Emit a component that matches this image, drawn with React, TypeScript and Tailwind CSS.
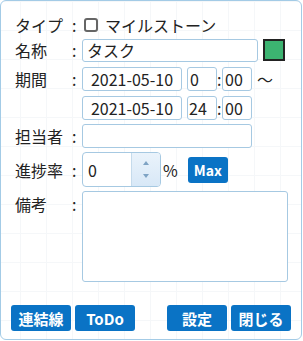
import React from "react";

const font = { fontFamily: '"Noto Sans CJK JP", "Noto Sans", sans-serif' };

function Label ( { text }: { text: string } )
{
  return (
    <div className="flex items-center shrink-0">
      <span className="w-[57px] text-[16px] text-[#222]">{ text }</span>
      <span className="w-[10px] text-[16px] text-[#222]">:</span>
    </div>
  );
}

function Box ( { className = "", children }: { className?: string; children?: React.ReactNode } )
{
  return (
    <div className={ `border border-[#a6c9e2] rounded-[3px] bg-white flex items-center text-[16px] text-[#222] ${ className }` }>
      { children }
    </div>
  );
}

function Btn ( { text, className = "" }: { text: string; className?: string } )
{
  return (
    <button className={ `w-[60px] h-[26px] rounded-[3px] bg-[#0a73c5] text-white text-[15px] font-bold flex items-center justify-center leading-none ${ className }` }>
      { text }
    </button>
  );
}

export default function App ()
{
  return (
    <div className="w-[303px] h-[341px] bg-white" style={ font }>
      <div className="w-[302px] h-[340px] border border-[#a3cbe6] rounded-[6px] bg-[linear-gradient(to_right,#f5f7f9_1px,transparent_1px),linear-gradient(to_bottom,#f5f7f9_1px,transparent_1px)] bg-[size:26px_29px] bg-[position:19px_0px] pl-[14px] pt-[12px] flex flex-col">
        {/* タイプ */ }
        <div className="flex items-center h-[24px]">
          <Label text="タイプ" />
          <span className="ml-[2px] w-[14px] h-[14px] border-2 border-[#666] rounded-[3px] bg-white" />
          <span className="ml-[7px] text-[16px] text-[#222]">マイルストーン</span>
        </div>

        {/* 名称 */ }
        <div className="flex items-center mt-[1px]">
          <Label text="名称" />
          <Box className="w-[176px] h-[23px] px-[4px]">タスク</Box>
          <span className="ml-[5px] w-[22px] h-[22px] border-2 border-[#222] bg-[#3cb371]" />
        </div>

        {/* 期間 */ }
        <div className="flex items-center mt-[5px]">
          <Label text="期間" />
          <Box className="w-[100px] h-[24px] justify-center">2021-05-10</Box>
          <Box className="ml-[5px] w-[30px] h-[24px] px-[2px]">0</Box>
          <span className="w-[5px] text-[16px] text-[#222] leading-none">:</span>
          <Box className="w-[30px] h-[24px] px-[2px]">00</Box>
          <span className="ml-[5px] text-[16px] text-[#222]">〜</span>
        </div>
        <div className="flex items-center mt-[5px] pl-[67px]">
          <Box className="w-[100px] h-[24px] justify-center">2021-05-10</Box>
          <Box className="ml-[5px] w-[30px] h-[24px] px-[1px]">24</Box>
          <span className="w-[5px] text-[16px] text-[#222] leading-none">:</span>
          <Box className="w-[30px] h-[24px] px-[2px]">00</Box>
        </div>

        {/* 担当者 */ }
        <div className="flex items-center mt-[4px]">
          <Label text="担当者" />
          <Box className="w-[170px] h-[24px]" />
        </div>

        {/* 進捗率 */ }
        <div className="flex items-center mt-[4px]">
          <Label text="進捗率" />
          <div className="w-[79px] h-[35px] border border-[#a6c9e2] rounded-[4px] bg-white flex overflow-hidden">
            <div className="flex-1 flex items-center pl-[5px] text-[16px] text-[#222]">0</div>
            <div className="w-[29px] border-l border-[#c5dbec] bg-[linear-gradient(to_bottom,#eaf3fb,#d8e8f7)] flex flex-col items-center justify-center gap-[9px]">
              <span className="w-0 h-0 border-l-[3px] border-r-[3px] border-b-[4px] border-l-transparent border-r-transparent border-b-[#7ea3c4]" />
              <span className="w-0 h-0 border-l-[3px] border-r-[3px] border-t-[4px] border-l-transparent border-r-transparent border-t-[#7ea3c4]" />
            </div>
          </div>
          <span className="ml-[2px] text-[16px] text-[#222]">%</span>
          <button className="ml-[10px] w-[40px] h-[26px] rounded-[3px] bg-[#0a73c5] text-white text-[14px] font-bold flex items-center justify-center leading-none">Max</button>
        </div>

        {/* 備考 */ }
        <div className="flex items-start mt-[4px]">
          <div className="pt-[1px]">
            <Label text="備考" />
          </div>
          <Box className="w-[206px] h-[91px]" />
        </div>

        {/* buttons */ }
        <div className="flex items-center mt-[23px] -ml-[4px]">
          <Btn text="連結線" />
          <Btn text="ToDo" className="ml-[4px]" />
          <Btn text="設定" className="ml-[32px]" />
          <Btn text="閉じる" className="ml-[4px]" />
        </div>
      </div>
    </div>
  );
}
